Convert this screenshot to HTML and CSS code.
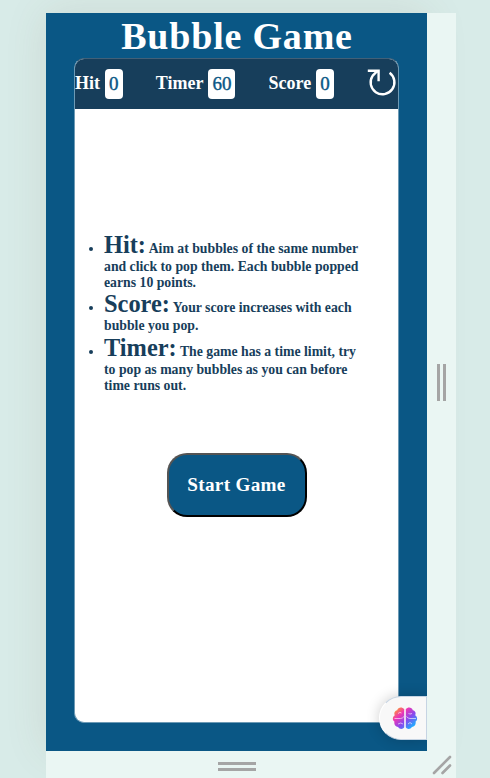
FILE: index.html
```html
<!DOCTYPE html>
<html lang="en">
<head>
<meta charset="utf-8">
<title>Bubble Game</title>
<link rel="stylesheet" href="styles.css">
</head>
<body>
<div class="viewport">
  <main class="device">
    <h1 class="title">Bubble Game</h1>
    <section class="panel">
      <header class="bar">
        <div class="stat">Hit<span class="value">0</span></div>
        <div class="stat">Timer<span class="value">60</span></div>
        <div class="stat">Score<span class="value">0</span></div>
        <svg class="reload" viewBox="0 0 30 30" fill="none" stroke="#fff" stroke-width="2.4">
          <path d="M22.600 4.800A11.900 11.900 0 1 1 5.600 7.800L10.600 2.700M.8 2.700H11.600V13.200"/>
        </svg>
      </header>
      <div class="content">
        <ul class="rules">
          <li><span class="term">Hit:</span> Aim at bubbles of the same number and click to pop them. Each bubble popped earns 10 points.</li>
          <li><span class="term">Score:</span> Your score increases with each bubble you pop.</li>
          <li><span class="term">Timer:</span> The game has a time limit, try to pop as many bubbles as you can before time runs out.</li>
        </ul>
        <button class="start">Start Game</button>
      </div>
    </section>
    <div class="assistant">
      <svg class="brain" viewBox="0 0 26 24">
        <defs>
          <linearGradient id="hue" x1="0" y1="0" x2="1" y2="1">
            <stop offset="0.08" stop-color="#ff9a2e"/>
            <stop offset=".32" stop-color="#ee36b4"/>
            <stop offset=".58" stop-color="#8848ee"/>
            <stop offset=".85" stop-color="#22aaff"/>
          </linearGradient>
        </defs>
        <path fill="url(#hue)" d="M12.2 3C10 .5 6 1 5.2 4.3 2.4 5 1.8 7.5 2.8 9.3.2 11 .4 14.3 2.4 15.6 1.8 19 4 21 6 21c1.800 2.700 5 2.300 6.200.3ZM13.800 3C16 .5 20 1 20.800 4.300c2.800.7 3.400 3.200 2.400 5C25.800 11 25.600 14.300 23.600 15.600 24.200 19 22 21 20 21c-1.800 2.700-5 2.300-6.200.3Z"/>
        <path fill="none" stroke="#fff" stroke-opacity=".6" stroke-width="1" d="M6 7.500q2-2 3.500-.5M2.500 12.500h6q2 0 3.500-2M6 18q3-2 5 0M20 7.500q-3 1.500-3.500-.5M24 12.500h-6q-2 0-3.500-2M20 18q-2-3-4 0"/>
      </svg>
    </div>
  </main>
  <div class="handle side"><svg width="9" height="37"><path d="M1.500 0V37M7.500 0V37"/></svg></div>
  <div class="handle bottom"><svg width="38" height="9"><path d="M0 1.500H38M0 7.500H38"/></svg></div>
  <div class="handle corner"><svg width="29" height="27"><path d="M7 22 23 6M15.500 22 23 14.500"/></svg></div>
</div>
</body>
</html>
```
FILE: styles.css
```css
* { box-sizing: border-box; }
body {
  margin: 0;
  height: 778px;
  overflow: hidden;
  background: #d8ebe8;
  font-family: "Liberation Serif", "Times New Roman", serif;
}
.viewport {
  display: grid;
  grid-template-columns: 381px 29px;
  grid-template-rows: 738px 27px;
  width: 410px;
  margin: 13px 0 0 46px;
}
.device {
  position: relative;
  background: #0a5785;
  padding: 0 28px;
  box-shadow: 0 0 40px rgba(115, 90, 60, .12);
}
.title {
  margin: 0;
  height: 45px;
  padding-left: 1px;
  line-height: 47px;
  font-size: 38px;
  letter-spacing: .8px;
  text-align: center;
  white-space: nowrap;
  color: #fff;
}
.panel {
  display: flex;
  flex-direction: column;
  height: 665px;
  border: 1px solid #6d9ab5;
  border-top-color: #416078;
  border-radius: 10px;
  overflow: hidden;
  background: #fff;
}
.bar {
  display: flex;
  align-items: center;
  justify-content: space-between;
  height: 50px;
  flex: none;
  background: #173e5b;
}
.stat {
  display: flex;
  align-items: center;
  gap: 5px;
  height: 30px;
  margin-bottom: 1px;
  font-size: 18px;
  font-weight: bold;
  color: #fff;
}
.value {
  padding: 0 4px;
  height: 30px;
  line-height: 30px;
  border-radius: 4px;
  background: #fff;
  color: #0a5785;
  font-size: 19px;
  font-weight: normal;
  -webkit-text-stroke: .4px #0a5785;
}
.reload { width: 30px; height: 30px; margin: 0 1px 2px 0; }
.content {
  display: flex;
  flex-direction: column;
  align-items: center;
  padding-top: 122px;
}
.rules {
  align-self: flex-start;
  width: 286px;
  height: 164px;
  margin: 0;
  padding: 0 0 0 29px;
  font-size: 13.750px;
  font-weight: bold;
  line-height: 16px;
  color: #173e5b;
}
.rules li:nth-child(2) { margin-top: -1px; }
.term { font-size: 24.400px; line-height: 28px; }
.start {
  width: 140px;
  height: 64px;
  margin-top: 58px;
  padding: 0;
  border: 2px outset #000;
  border-radius: 20px;
  background: #0a5785;
  color: #fff;
  font: bold 19.200px "Liberation Serif", serif;
  letter-spacing: .3px;
}
.assistant {
  position: absolute;
  right: 0;
  bottom: 11px;
  display: flex;
  align-items: center;
  width: 48px;
  height: 44px;
  padding-left: 12px;
  border: 1px solid #c6d4e3;
  border-left-color: #fff;
  border-radius: 22px 0 0 22px;
  background: #f8f8f8;
  box-shadow: 0 0 14px rgba(0, 0, 0, .2);
}
.brain { width: 26px; height: 24px; }
.handle {
  display: flex;
  align-items: center;
  justify-content: center;
  background: #eaf6f3;
  z-index: 1;
}
.handle path { stroke: #a5a5a5; stroke-width: 3; fill: none; }
.bottom { padding-top: 4px; }
.corner path { stroke-linecap: round; stroke-width: 2.600; }
```
